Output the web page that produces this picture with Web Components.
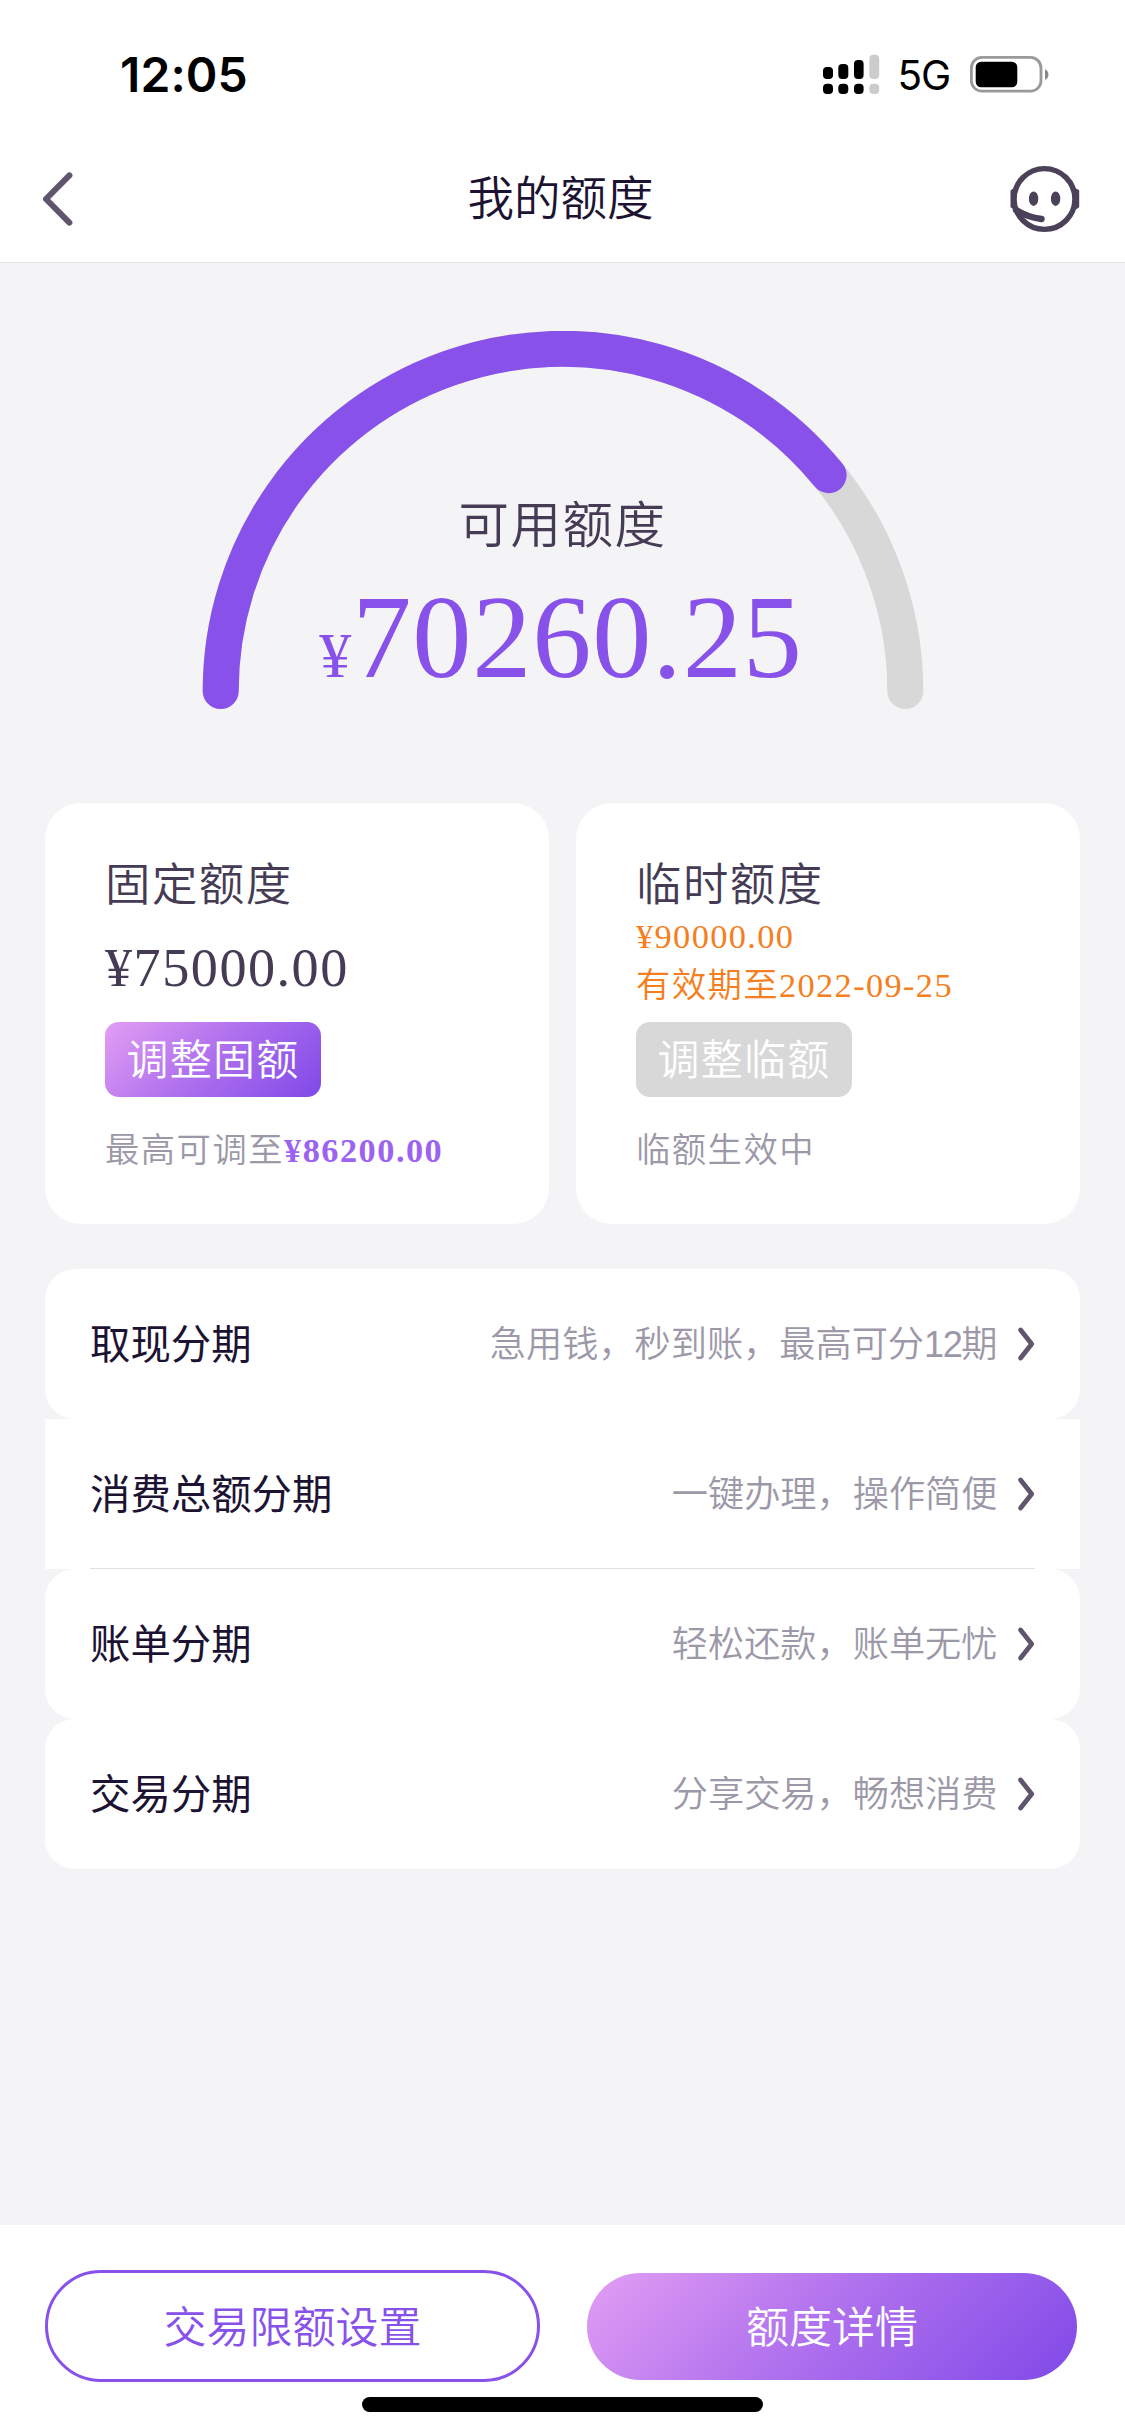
<!DOCTYPE html>
<html lang="zh-CN">
<head>
<meta charset="utf-8">
<title>我的额度</title>
<style>
html,body{margin:0;padding:0}
body{width:1125px;height:2435px;overflow:hidden;background:#f4f4f7;font-family:"Noto Sans CJK SC",sans-serif;color:#453b54}
</style>
</head>
<body>
<quota-page></quota-page>
<script>
const define = (name, html) => {
  const tpl = document.createElement('template');
  tpl.innerHTML = html.trim();
  customElements.define(name, class extends HTMLElement {
    constructor() {
      super();
      this.attachShadow({ mode: 'open' }).append(tpl.content.cloneNode(true));
    }
  });
};

define('status-bar', `
<style>
:host{display:flex;box-sizing:border-box;height:144px;padding:46px 76px 0 120px;justify-content:space-between;align-items:flex-start;color:#000;font-family:Inter,sans-serif}
.time{font-size:48px;font-weight:600;line-height:58px;letter-spacing:.1px}
.right{display:flex;align-items:flex-start}
.net{font-size:40.5px;line-height:48px;margin:6px 20px 0 18px;letter-spacing:-1.2px}
svg{display:block}
.sig{margin-top:8px}.bat{margin-top:9px}
</style>
<div class="time">12:05</div>
<div class="right">
<svg class="sig" width="57" height="41" viewBox="0 0 57 41">
<rect x="0" y="13" width="10" height="12" rx="4"/><rect x="15.3" y="10" width="10" height="15" rx="4"/><rect x="31" y="6" width="9.6" height="19" rx="4"/><rect x="46.4" y=".7" width="9.8" height="24.3" rx="4" fill="#ccc"/>
<rect x="0" y="29.7" width="10" height="10.4" rx="4"/><rect x="15.3" y="29.7" width="10" height="10.4" rx="4"/><rect x="31" y="29.7" width="9.6" height="10.4" rx="4"/><rect x="46.4" y="29.7" width="9.8" height="10.4" rx="4" fill="#ccc"/>
</svg>
<div class="net">5G</div>
<svg class="bat" width="79" height="40" viewBox="0 0 79 40">
<rect x="1.4" y="2.4" width="69.6" height="33.8" rx="10.5" fill="none" stroke="#999" stroke-width="2.8"/>
<rect x="5.7" y="6.7" width="41.6" height="25.6" rx="5.5"/>
<path d="M75 14.2C79.6 16 79.6 23 75 24.8Z" fill="#888"/>
</svg>
</div>`);

define('nav-bar', `
<style>
:host{display:grid;grid-template-columns:1fr auto 1fr;align-items:center;box-sizing:border-box;height:119px;padding:0 45px 8px 41px;border-bottom:1px solid #e2e2e4}
h1{margin:0;font-size:46.5px;font-weight:350;line-height:60px;color:#1c1333;padding-bottom:8px}
svg{display:block}.face{justify-self:end}
</style>
<svg width="34" height="56" viewBox="0 0 34 56"><path d="M28.4 4.4L5 28L28.4 51.6" fill="none" stroke="#5f556c" stroke-width="6" stroke-linecap="round" stroke-linejoin="round"/></svg>
<h1><slot></slot></h1>
<svg class="face" width="70" height="68" viewBox="0 0 70 68" fill="#4b4259">
<circle cx="34.5" cy="34" r="30.4" fill="none" stroke="#4b4259" stroke-width="5.4"/>
<path d="M.5 25.5Q.8 24.6 5 23V45Q1 43 .5 42ZM69.2 25.5Q69 24.6 64.5 23V45Q69 43 69.2 42Z"/>
<ellipse cx="23.6" cy="33.7" rx="4.7" ry="7.2"/><ellipse cx="45.6" cy="33.7" rx="4.7" ry="7.2"/>
<path d="M6 45Q18 52.5 31.5 54" fill="none" stroke="#4b4259" stroke-width="6.4" stroke-linecap="round"/>
</svg>`);

define('quota-gauge', `
<style>
:host{display:grid;justify-content:center;height:378px;padding-top:68px;box-sizing:content-box}
svg,.text{grid-area:1/1}
svg{display:block}
.text{display:flex;flex-direction:column;align-items:center;padding-top:157px}
.label{font-size:50.5px;line-height:66px;letter-spacing:1.5px;font-weight:350;color:#453b54}
.sum{font-family:"Liberation Serif",serif;color:#8751ea;line-height:130px;font-size:118.4px;letter-spacing:.8px;margin-top:18px;white-space:nowrap;padding-right:3px}
small{font-size:64px;letter-spacing:1px}
</style>
<svg width="722" height="378" viewBox="0 0 722 378" fill="none" stroke-width="36" stroke-linecap="round">
<path d="M18.7 360A342.3 342.3 0 0 1 703.3 360" stroke="#d8d8d8"/>
<path d="M18.7 360A342.3 342.3 0 0 1 626.6 144.2" stroke="#8751ea"/>
</svg>
<div class="text"><div class="label"><slot name="label"></slot></div><div class="sum"><small>¥</small><slot></slot></div></div>`);

define('quota-card', `
<style>
:host{display:block;box-sizing:border-box;width:504px;height:421px;border-radius:36px;background:#fff;padding:48px 20px 0 60px;letter-spacing:1.5px;font-weight:350;white-space:nowrap}
.title{font-size:45.4px;line-height:60px;color:#453b54}
.mid{height:111px;font-family:"Liberation Serif","Noto Sans CJK SC",serif}
.note{margin-top:29px;font-size:34.3px;line-height:48px;color:#9c98a8;font-family:"Liberation Serif","Noto Sans CJK SC",serif}
</style>
<div class="title"><slot name="title"></slot></div>
<div class="mid"><slot></slot></div>
<slot name="action"></slot>
<div class="note"><slot name="note"></slot></div>`);

define('money-text', `
<style>
:host{display:block;font-size:54.2px;line-height:75px;padding-top:20px;color:#453b54}
:host([temp]){font-size:34.4px;line-height:49px;padding-top:1px;color:#f57f20;letter-spacing:1.35px}
:host([inline]){display:inline;font-size:inherit;line-height:inherit;padding:0;font-weight:700;color:#9c63f0}
</style><slot></slot>`);

define('adjust-button', `
<style>
:host{display:flex;align-items:center;justify-content:center;width:216px;height:75px;border-radius:14px;box-sizing:border-box;padding-bottom:6px;background:linear-gradient(135deg,#e29ef3,#b273ee 45%,#8049e8);color:#fff;font-size:42px;line-height:60px;letter-spacing:1.2px}
:host([disabled]){background:#d8d8d8}
</style><slot></slot>`);

define('list-row', `
<style>
:host{display:flex;align-items:center;box-sizing:border-box;height:150px;padding:0 42px 0 45px;border-radius:30px;background:#fff;white-space:nowrap}
:host([square]){border-radius:0;background:linear-gradient(#e1e0e5,#e1e0e5) 45px 100%/945px 1px no-repeat #fff}
.name{font-size:40.4px;line-height:56px;color:#1c1333;font-weight:400;padding-bottom:4px}
.hint{margin-left:auto;font-size:36.2px;line-height:52px;font-weight:350;color:#9c98a8;font-family:"Liberation Sans","Noto Sans CJK SC",sans-serif;padding-top:2px}
svg{display:block;margin-left:18.5px}
</style>
<div class="name"><slot></slot></div><div class="hint"><slot name="hint"></slot></div>
<svg width="22" height="36" viewBox="0 0 22 36"><path d="M4.6 4L15.7 18L4.6 32" fill="none" stroke="#5f556c" stroke-width="4.8" stroke-linecap="round" stroke-linejoin="round"/></svg>`);

define('pill-button', `
<style>
:host{display:flex;align-items:center;justify-content:center;box-sizing:border-box;width:495px;height:112px;border-radius:56px;border:3px solid #8751ea;color:#8751ea;font-size:43px;line-height:60px;font-weight:350;padding-bottom:5px}
:host([primary]){width:490px;height:107px;border:0;color:#fff;background:linear-gradient(135deg,#e29ef3,#b273ee 45%,#8049e8)}
</style><slot></slot>`);

define('bottom-bar', `
<style>
:host{display:flex;flex-direction:column;align-items:center;box-sizing:border-box;height:210px;background:#fff;padding-top:45px}
.row{display:flex;align-items:center;gap:47px;width:1035px;height:112px}
.home{width:401px;height:15px;border-radius:8px;background:#000;margin-top:15px}
</style>
<div class="row"><slot></slot></div><div class="home"></div>`);

define('quota-page', `
<style>
:host{display:flex;flex-direction:column;width:1125px;height:2435px;background:#f4f4f7}
header{background:#fff}
.cards{display:flex;gap:27px;margin:94px 45px 45px}
.list{display:flex;flex-direction:column;margin:0 45px}
.num{letter-spacing:-1.5px}
bottom-bar{margin-top:auto}
</style>
<header><status-bar></status-bar><nav-bar>我的额度</nav-bar></header>
<quota-gauge><span slot="label">可用额度</span>70260.25</quota-gauge>
<section class="cards">
<quota-card><span slot="title">固定额度</span><money-text>¥75000.00</money-text><adjust-button slot="action">调整固额</adjust-button><span slot="note">最高可调至<money-text inline>¥86200.00</money-text></span></quota-card>
<quota-card><span slot="title">临时额度</span><money-text temp>¥90000.00<br>有效期至2022-09-25</money-text><adjust-button slot="action" disabled>调整临额</adjust-button><span slot="note">临额生效中</span></quota-card>
</section>
<section class="list">
<list-row>取现分期<span slot="hint">急用钱，秒到账，最高可分<span class="num">12</span>期</span></list-row>
<list-row square>消费总额分期<span slot="hint">一键办理，操作简便</span></list-row>
<list-row>账单分期<span slot="hint">轻松还款，账单无忧</span></list-row>
<list-row>交易分期<span slot="hint">分享交易，畅想消费</span></list-row>
</section>
<bottom-bar><pill-button>交易限额设置</pill-button><pill-button primary>额度详情</pill-button></bottom-bar>`);
</script>
</body>
</html>
